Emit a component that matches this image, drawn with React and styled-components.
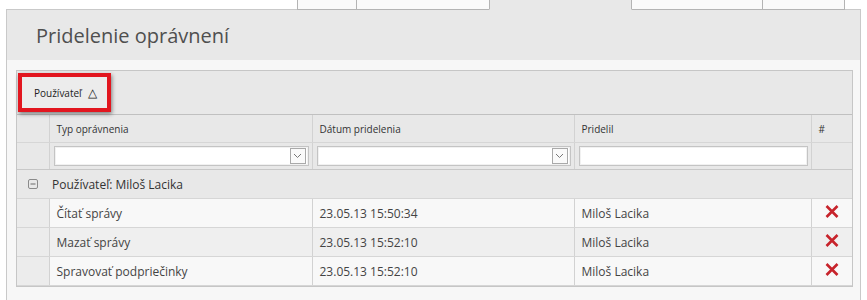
import React from 'react';
import styled, { createGlobalStyle } from 'styled-components';

const GlobalStyle = createGlobalStyle`
	html, body {
		margin: 0;
		padding: 0;
		background: #fff;
		font-family: "Open Sans", "Liberation Sans", sans-serif;
	}
`;

const Page = styled.div`
	width: 867px;
	height: 300px;
	overflow: hidden;
`;

const TabsRow = styled.div`
	display: flex;
	height: 10px;
	padding-left: 297px;
	position: relative;
	z-index: 1;
`;

const Tab = styled.div`
	width: ${p => p.w}px;
	height: 10px;
	box-sizing: border-box;
	overflow: hidden;
	text-align: center;
	border: 1px solid #b4b4b4;
	border-top: none;
	border-left-width: ${p => (p.first ? 1 : 0)}px;
	border-bottom-color: ${p => (p.active ? '#e8e8e8' : '#b4b4b4')};
	background: ${p => (p.active ? '#e8e8e8' : '#fafafa')};
	${p => p.active && 'border-left-width: 1px; margin-left: -1px;'}
	font-size: 12px;
	color: #333;
`;

const TabLabel = styled.span`
	display: block;
	line-height: 16px;
	margin-top: -15px;
	white-space: nowrap;
`;

const Panel = styled.div`
	margin: -1px 6px 0 6px;
	height: 291px;
	border: 1px solid #c9c9c9;
	border-bottom: none;
	background: #f7f7f7;
`;

const PanelHeader = styled.div`
	height: 50px;
	display: flex;
	align-items: center;
	padding-left: 29px;
	background: #e8e8e8;
`;

const Title = styled.h1`
	margin: 0;
	font-family: "Open Sans", sans-serif;
	font-weight: 400;
	font-size: 20px;
	color: #4f4f4f;
`;

const PanelBody = styled.div`
	padding: 10px 7px 0 9px;
`;

const Grid = styled.div`
	border: 1px solid #c6c6c6;
	background: #e8e8e8;
`;

const GroupPanel = styled.div`
	display: flex;
	align-items: center;
	height: 43px;
	padding-left: 1px;
	border-bottom: 1px solid #c0c0c0;
`;

const GroupButton = styled.button`
	display: flex;
	align-items: center;
	gap: 6px;
	height: 39px;
	width: 93px;
	box-sizing: border-box;
	padding: 0 0 0 12px;
	border: 4px solid #e2161f;
	background: #ececec;
	box-shadow: 1px 2px 4px rgba(0, 0, 0, 0.45);
	font-family: "Open Sans", sans-serif;
	font-size: 10px;
	color: #222;
	cursor: pointer;
`;

const SortMark = styled.span`
	font-size: 12px;
	line-height: 1;
`;

const Table = styled.table`
	width: 100%;
	border-collapse: collapse;
	table-layout: fixed;
	font-family: "Open Sans", sans-serif;
`;

const HeadCell = styled.th`
	height: 27px;
	padding: 0 7px;
	text-align: left;
	font-weight: 400;
	font-size: 10px;
	color: #333;
	border-left: 1px solid #d2d2d2;
	border-bottom: 1px solid #d6d6d6;
	&:first-child { border-left: none; }
`;

const FilterCell = styled.td`
	height: 26px;
	padding: 0 3px 0 4px;
	border-left: 1px solid #d2d2d2;
	border-bottom: 1px solid #c8c8c8;
	&:first-child { border-left: none; }
`;

const FilterBox = styled.div`
	display: flex;
	align-items: center;
	justify-content: flex-end;
	height: 20px;
	box-sizing: border-box;
	padding-right: 2px;
	background: #fff;
	border: 1px solid #c4c4c4;
	box-shadow: inset 0 0 0 1px #f1f1f1;
`;

const DropButton = styled.span`
	display: flex;
	align-items: center;
	justify-content: center;
	width: 16px;
	height: 16px;
	box-sizing: border-box;
	border: 1px solid #a9a9a9;
	background: #fafafa;
`;

const GroupRow = styled.tr`
	background: #e8e8e8;
`;

const GroupCell = styled.td`
	height: 28px;
	padding: 0 ${p => (p.icon ? 0 : 3)}px;
	text-align: ${p => (p.icon ? 'center' : 'left')};
	font-size: 12px;
	color: #333;
	border-bottom: 1px solid #d6d6d6;
`;

const DataRow = styled.tr`
	background: ${p => (p.alt ? '#efefef' : '#f8f8f8')};
`;

const IndentCell = styled.td`
	background: #ececec;
	border-bottom: 1px solid #d6d6d6;
`;

const Cell = styled.td`
	height: 28px;
	padding: 0 7px;
	font-size: 12px;
	color: #444;
	white-space: nowrap;
	border-left: 1px solid #d2d2d2;
	border-bottom: 1px solid #d6d6d6;
	text-align: ${p => (p.center ? 'center' : 'left')};
`;

const DeleteButton = styled.span`
	display: inline-flex;
	padding-bottom: 2px;
	cursor: pointer;
`;

const Chevron = () => (
	<svg width="9" height="6" viewBox="0 0 9 6">
		<path d="M1 1 L4.5 4.5 L8 1" fill="none" stroke="#777" strokeWidth="1" />
	</svg>
);

const Collapse = () => (
	<svg width="10" height="10" viewBox="0 0 10 10" style={{ display: 'block', margin: '0 auto' }}>
		<rect x="0.5" y="0.5" width="9" height="9" rx="1.5" fill="none" stroke="#8a8a8a" />
		<path d="M2.5 5 H7.5" stroke="#6a6a6a" strokeWidth="1" />
	</svg>
);

const RedCross = () => (
	<svg width="14" height="13" viewBox="0 0 14 13">
		<path d="M1.5 1 L12.5 12 M12.5 1 L1.5 12" stroke="#c7232b" strokeWidth="2.6" strokeLinecap="butt" />
	</svg>
);

const tabs = [
	{ w: 60, label: 'Info' },
	{ w: 133, label: 'Správy a priečinky' },
	{ w: 143, label: 'Oprávnenia', active: true },
	{ w: 131, label: 'Nastavenia pravidiel' },
	{ w: 82, label: 'Iné' },
];

const rows = [
	{ type: 'Čítať správy', date: '23.05.13 15:50:34', by: 'Miloš Lacika' },
	{ type: 'Mazať správy', date: '23.05.13 15:52:10', by: 'Miloš Lacika' },
	{ type: 'Spravovať podpriečinky', date: '23.05.13 15:52:10', by: 'Miloš Lacika' },
];

const App = () => (
	<Page>
		<GlobalStyle />
		<TabsRow>
			{tabs.map((t, i) => (
				<Tab key={t.label} w={t.w} first={i === 0} active={t.active}>
					<TabLabel>{t.label}</TabLabel>
				</Tab>
			))}
		</TabsRow>
		<Panel>
			<PanelHeader>
				<Title>Pridelenie oprávnení</Title>
			</PanelHeader>
			<PanelBody>
				<Grid>
					<GroupPanel>
						<GroupButton>
							Používateľ <SortMark>△</SortMark>
						</GroupButton>
					</GroupPanel>
					<Table>
						<colgroup>
							<col style={{ width: 32 }} />
							<col style={{ width: 263 }} />
							<col style={{ width: 262 }} />
							<col style={{ width: 237 }} />
							<col />
						</colgroup>
						<thead>
							<tr>
								<HeadCell />
								<HeadCell>Typ oprávnenia</HeadCell>
								<HeadCell>Dátum pridelenia</HeadCell>
								<HeadCell>Pridelil</HeadCell>
								<HeadCell>#</HeadCell>
							</tr>
							<tr>
								<FilterCell />
								<FilterCell>
									<FilterBox>
										<DropButton><Chevron /></DropButton>
									</FilterBox>
								</FilterCell>
								<FilterCell>
									<FilterBox>
										<DropButton><Chevron /></DropButton>
									</FilterBox>
								</FilterCell>
								<FilterCell>
									<FilterBox />
								</FilterCell>
								<FilterCell />
							</tr>
						</thead>
						<tbody>
							<GroupRow>
								<GroupCell icon><Collapse /></GroupCell>
								<GroupCell colSpan={4}>Používateľ: Miloš Lacika</GroupCell>
							</GroupRow>
							{rows.map((r, i) => (
								<DataRow key={r.type} alt={i === 1}>
									<IndentCell />
									<Cell>{r.type}</Cell>
									<Cell>{r.date}</Cell>
									<Cell>{r.by}</Cell>
									<Cell center>
										<DeleteButton><RedCross /></DeleteButton>
									</Cell>
								</DataRow>
							))}
						</tbody>
					</Table>
				</Grid>
			</PanelBody>
		</Panel>
	</Page>
);

export default App;
